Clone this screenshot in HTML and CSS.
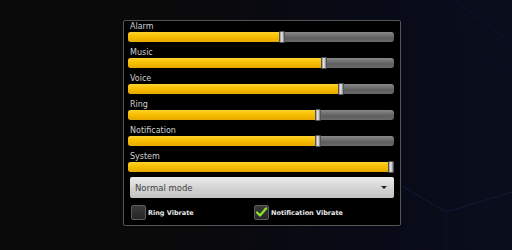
FILE: index.html
```html
<!DOCTYPE html>
<html lang="en">
<head>
    <meta charset="UTF-8">
    <meta name="viewport" content="width=device-width, initial-scale=1.0">
    <title>Volume Control</title>
    <link rel="stylesheet" href="styles.css">
</head>
<body>
    <svg class="backdrop" width="512" height="250" viewBox="0 0 512 250">
        <path d="M402 186 L446 212 L512 192" fill="none" stroke="#111a3a" stroke-width="1"/>
        <path d="M446 212 L446 250" fill="none" stroke="#0d142c" stroke-width="1"/>
        <path d="M455 0 L512 44" fill="none" stroke="#0e1530" stroke-width="1"/>
        <path d="M455 0 L470 48 L512 70" fill="none" stroke="#0b1026" stroke-width="1"/>
    </svg>

    <div class="panel">
        <div class="volume-row">
            <div class="volume-label">Alarm</div>
            <div class="track"><div class="fill" style="width: 58%"><span class="thumb"></span></div></div>
        </div>
        <div class="volume-row">
            <div class="volume-label">Music</div>
            <div class="track"><div class="fill" style="width: 73.5%"><span class="thumb"></span></div></div>
        </div>
        <div class="volume-row">
            <div class="volume-label">Voice</div>
            <div class="track"><div class="fill" style="width: 80%"><span class="thumb"></span></div></div>
        </div>
        <div class="volume-row">
            <div class="volume-label">Ring</div>
            <div class="track"><div class="fill" style="width: 71.5%"><span class="thumb"></span></div></div>
        </div>
        <div class="volume-row">
            <div class="volume-label">Notification</div>
            <div class="track"><div class="fill" style="width: 71.5%"><span class="thumb"></span></div></div>
        </div>
        <div class="volume-row">
            <div class="volume-label">System</div>
            <div class="track"><div class="fill" style="width: 99%"><span class="thumb"></span></div></div>
        </div>

        <div class="mode-select">
            <span>Normal mode</span>
            <span class="arrow"></span>
        </div>

        <div class="vibrate-options">
            <label class="check-item">
                <span class="check-box"></span>
                <span class="check-text">Ring Vibrate</span>
            </label>
            <label class="check-item">
                <span class="check-box checked">
                    <svg width="13" height="13" viewBox="0 0 13 13">
                        <path d="M2 6.5 L5 9.5 L11 2.5" fill="none" stroke="#8ee02a" stroke-width="2.4" stroke-linecap="round" stroke-linejoin="round"/>
                    </svg>
                </span>
                <span class="check-text">Notification Vibrate</span>
            </label>
        </div>
    </div>
</body>
</html>
```

FILE: styles.css
```css
* { margin: 0; padding: 0; box-sizing: border-box; }

body {
    width: 512px;
    height: 250px;
    overflow: hidden;
    background: linear-gradient(90deg, #0a0a0a 0%, #0a0a0c 40%, #080a16 70%, #0a0d1c 100%);
    font-family: 'DejaVu Sans', sans-serif;
    position: relative;
    padding-top: 20px;
}

.backdrop {
    position: absolute;
    top: 0;
    left: 0;
    z-index: 0;
}

.panel {
    position: relative;
    z-index: 1;
    margin-left: 123px;
    width: 278px;
    height: 206px;
    background: #000;
    border: 1px solid #555;
    border-radius: 2px;
    padding: 0 6px 0 4px;
}

.volume-row {
    margin-bottom: 5px;
}

.volume-label {
    height: 11px;
    line-height: 11px;
    font-size: 8px;
    color: #cfcfcf;
    padding-left: 2px;
}

.track {
    height: 10px;
    border-radius: 3px;
    background: linear-gradient(#8a8a8a, #5e5e5e 60%, #6a6a6a);
    position: relative;
}

.fill {
    height: 100%;
    border-radius: 3px 0 0 3px;
    background: linear-gradient(#ffd22e, #f7bf00 45%, #e8a800);
    position: relative;
}

.thumb {
    position: absolute;
    right: -3px;
    top: -1px;
    width: 6px;
    height: 12px;
    border-radius: 1px;
    background: linear-gradient(90deg, #8c8c8c, #e6e6e6 40%, #cfcfcf 60%, #7a7a7a);
    border: 1px solid #555;
}

.mode-select {
    margin-top: 1px;
    margin-left: 2px;
    height: 21px;
    border-radius: 2px;
    background: linear-gradient(#ececec, #d4d4d4 50%, #c2c2c2);
    display: flex;
    align-items: center;
    justify-content: space-between;
    padding: 0 7px 0 5px;
    font-size: 8.5px;
    color: #444;
}

.arrow {
    width: 0;
    height: 0;
    border-left: 3px solid transparent;
    border-right: 3px solid transparent;
    border-top: 3px solid #222;
}

.vibrate-options {
    display: flex;
    margin-top: 7px;
    padding-left: 3px;
}

.check-item {
    display: flex;
    align-items: center;
    gap: 2px;
    width: 123px;
}

.check-box {
    width: 15px;
    height: 15px;
    border-radius: 2px;
    border: 1px solid #5c5c5c;
    background: linear-gradient(#3a3a3a, #262626);
    display: flex;
    align-items: center;
    justify-content: center;
}

.check-text {
    font-size: 6.5px;
    font-weight: bold;
    color: #e8e8e8;
}
```
